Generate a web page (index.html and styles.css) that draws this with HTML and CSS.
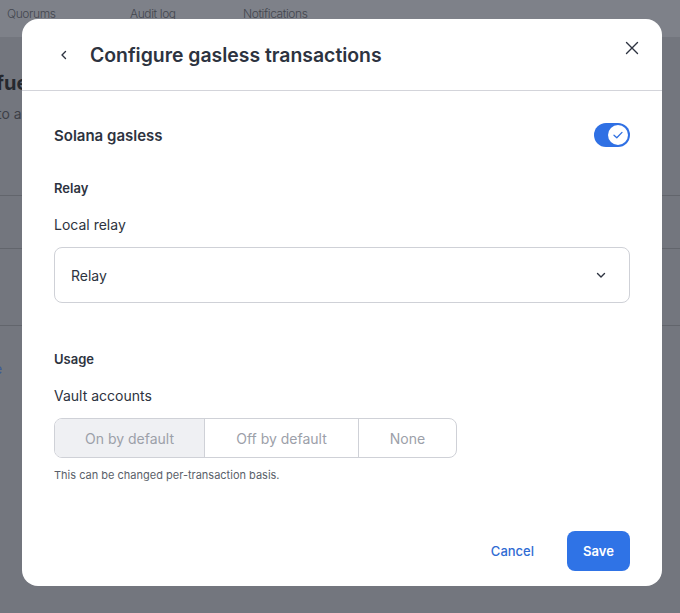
FILE: index.html
```html
<!DOCTYPE html>
<html>
<head>
<meta charset="utf-8">
<link rel="stylesheet" href="styles.css">
</head>
<body>
<div class="page">
  <nav class="tabs">
    <span class="tab">Quorums</span>
    <span class="tab">Audit log</span>
    <span class="tab">Notifications</span>
  </nav>
  <div class="content">
    <h2 class="bg-title">fue</h2>
    <p class="bg-sub">to a</p>
    <div class="bg-row r1"></div>
    <div class="bg-row r2"></div>
    <div class="bg-row r3"><span class="bg-link">e</span></div>
  </div>
</div>

<div class="modal">
  <header class="modal-head">
    <button class="icon-btn back" aria-label="Back">
      <svg width="12" height="12" viewBox="0 0 12 12"><path d="M7.5 2.5 L4 6 L7.5 9.5" fill="none" stroke="#2d3340" stroke-width="1.4" stroke-linecap="round" stroke-linejoin="round"/></svg>
    </button>
    <h1 class="modal-title">Configure gasless transactions</h1>
    <button class="icon-btn close" aria-label="Close">
      <svg width="14" height="14" viewBox="0 0 14 14"><path d="M1.5 1.5 L12.5 12.5 M12.5 1.5 L1.5 12.5" fill="none" stroke="#2d3340" stroke-width="1.4" stroke-linecap="round"/></svg>
    </button>
  </header>
  <div class="modal-body">
    <div class="switch-row">
      <span class="switch-label">Solana gasless</span>
      <span class="toggle">
        <span class="knob">
          <svg width="12" height="12" viewBox="0 0 12 12"><path d="M2 6.3 L4.8 8.8 L10 3.4" fill="none" stroke="#2f6fe0" stroke-width="1.3" stroke-linecap="round" stroke-linejoin="round"/></svg>
        </span>
      </span>
    </div>

    <h3 class="section">Relay</h3>
    <label class="field-label">Local relay</label>
    <div class="select">
      <span>Relay</span>
      <svg width="12" height="12" viewBox="0 0 12 12"><path d="M2.5 4.5 L6 8 L9.5 4.5" fill="none" stroke="#2d3340" stroke-width="1.4" stroke-linecap="round" stroke-linejoin="round"/></svg>
    </div>

    <h3 class="section usage">Usage</h3>
    <label class="field-label">Vault accounts</label>
    <div class="segmented">
      <span class="seg active">On by default</span>
      <span class="seg">Off by default</span>
      <span class="seg none">None</span>
    </div>
    <p class="hint">This can be changed per-transaction basis.</p>
  </div>
  <footer class="modal-foot">
    <button class="btn-link">Cancel</button>
    <button class="btn-primary">Save</button>
  </footer>
</div>
</body>
</html>
```

FILE: styles.css
```css
* { box-sizing: border-box; }
html, body {
  margin: 0;
  width: 680px;
  height: 613px;
  overflow: hidden;
}
body {
  font-family: Inter, "Noto Sans", sans-serif;
  background: #73767e;
  position: relative;
  color: #2d3340;
}
.page {
  height: 100%;
}
.tabs {
  height: 37px;
  background: #7e8189;
  display: flex;
  align-items: flex-start;
  padding: 5px 0 0 7px;
}
.tab {
  font-size: 12px;
  font-weight: 300;
  letter-spacing: -0.4px;
  color: #43464e;
  line-height: 18px;
}
.tab:nth-child(1) { width: 123px; }
.tab:nth-child(2) { width: 113px; }
.content {
  position: relative;
}
.bg-title {
  margin: 0;
  padding-top: 34px;
  font-size: 20px;
  font-weight: 700;
  color: #25282e;
  line-height: 24px;
  margin-left: -4px;
}
.bg-sub {
  margin: 10px 0 0 -3px;
  font-size: 14px;
  color: #3d4047;
  line-height: 18px;
}
.bg-row {
  border-top: 1px solid #62656c;
}
.r1 { margin-top: 72px; height: 53px; }
.r2 { height: 77px; }
.r3 { height: 60px; padding-top: 32px; }
.bg-link {
  color: #3c5a9a;
  font-size: 14px;
  margin-left: -6px;
}

.modal {
  position: absolute;
  left: 22px;
  top: 19px;
  width: 640px;
  height: 567px;
  background: #fff;
  border-radius: 16px;
  display: flex;
  flex-direction: column;
}
.modal-head {
  display: flex;
  align-items: center;
  height: 72px;
  padding: 0 22px 0 36px;
  border-bottom: 1px solid #d3d4da;
}
.icon-btn {
  border: 0;
  background: none;
  padding: 0;
  display: flex;
  align-items: center;
  justify-content: center;
  cursor: pointer;
}
.back {
  width: 12px;
  height: 12px;
  margin-right: 20px;
  margin-top: 1px;
}
.modal-title {
  margin: 0;
  font-size: 19.4px;
  font-weight: 600;
  color: #2d3340;
  flex: 1;
}
.close {
  width: 16px;
  height: 16px;
  align-self: flex-start;
  margin-top: 21px;
}
.modal-body {
  padding: 31px 32px 0 32px;
  flex: 1;
}
.switch-row {
  display: flex;
  align-items: center;
  justify-content: space-between;
  height: 26px;
}
.switch-label {
  font-size: 15px;
  font-weight: 600;
  color: #2d3340;
}
.toggle {
  width: 36px;
  height: 24px;
  border-radius: 12px;
  background: #2f70e4;
  display: flex;
  align-items: center;
  justify-content: flex-end;
  padding-right: 2px;
}
.knob {
  width: 20px;
  height: 20px;
  border-radius: 50%;
  background: #fff;
  display: flex;
  align-items: center;
  justify-content: center;
}
.section {
  margin: 0;
  margin-top: 32px;
  font-size: 13px;
  font-weight: 600;
  color: #2d3340;
  line-height: 16px;
}
.section.usage {
  margin-top: 48px;
}
.field-label {
  display: block;
  margin-top: 21px;
  font-size: 14px;
  color: #2d3340;
  line-height: 16px;
}
.select {
  margin-top: 14px;
  height: 56px;
  border: 1px solid #cfd1d7;
  border-radius: 8px;
  display: flex;
  align-items: center;
  justify-content: space-between;
  padding: 0 22px 0 16px;
  font-size: 14px;
  color: #2d3340;
}
.segmented {
  margin-top: 14px;
  display: flex;
  width: 403px;
  height: 40px;
  border: 1px solid #cfd1d7;
  border-radius: 8px;
  overflow: hidden;
}
.seg {
  display: flex;
  align-items: center;
  justify-content: center;
  font-size: 14px;
  color: #9ca0a9;
  border-right: 1px solid #cfd1d7;
}
.seg:nth-child(1) { width: 150px; }
.seg:nth-child(2) { width: 154px; }
.seg.none { flex: 1; border-right: 0; }
.seg.active { background: #eff0f3; }
.hint {
  margin: 10px 0 0;
  font-size: 11px;
  color: #5a5f6a;
  line-height: 14px;
}
.modal-foot {
  display: flex;
  justify-content: flex-end;
  align-items: center;
  gap: 33px;
  padding: 0 32px 15px;
}
.btn-link {
  border: 0;
  background: none;
  font-family: inherit;
  font-size: 13px;
  font-weight: 500;
  color: #2f6bd3;
  padding: 0;
}
.btn-primary {
  border: 0;
  width: 63px;
  height: 40px;
  border-radius: 8px;
  background: #2f73e6;
  color: #fff;
  font-family: inherit;
  font-size: 13px;
  font-weight: 600;
}
```
